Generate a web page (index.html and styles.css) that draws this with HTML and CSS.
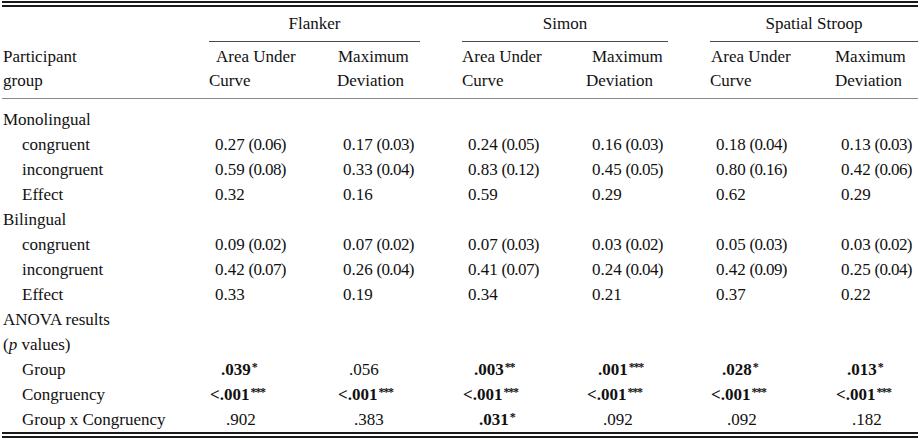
FILE: index.html
```html
<!DOCTYPE html>
<html lang="en">
<head>
<meta charset="utf-8">
<title>Mouse-tracking results by participant group</title>
<link rel="stylesheet" href="styles.css">
</head>
<body>
<div class="page">
  <div class="rule-double"></div>
  <table class="results">
    <colgroup>
      <col class="c-label"><col class="c-auc1"><col class="c-md1"><col class="c-gap">
      <col class="c-auc2"><col class="c-md2"><col class="c-gap">
      <col class="c-auc3"><col class="c-md3">
    </colgroup>
    <thead>
      <tr class="task-row">
        <th></th>
        <th colspan="2" class="task">Flanker</th>
        <th></th>
        <th colspan="2" class="task">Simon</th>
        <th></th>
        <th colspan="2" class="task">Spatial Stroop</th>
      </tr>
      <tr class="measure-row">
        <th class="label">Participant<br>group</th>
        <th class="ind-7">Area Under<br>Curve</th>
        <th class="ind-1">Maximum<br>Deviation</th>
        <th></th>
        <th>Area Under<br>Curve</th>
        <th class="ind-6">Maximum<br>Deviation</th>
        <th></th>
        <th class="ind-1">Area Under<br>Curve</th>
        <th>Maximum<br>Deviation</th>
      </tr>
    </thead>
    <tbody>
      <tr class="first"><td class="label" colspan="9">Monolingual</td></tr>
      <tr>
        <td class="label sub">congruent</td>
        <td class="num">0.27<span class="sd"> (0.06)</span></td><td class="num">0.17<span class="sd"> (0.03)</span></td><td></td>
        <td class="num">0.24<span class="sd"> (0.05)</span></td><td class="num">0.16<span class="sd"> (0.03)</span></td><td></td>
        <td class="num">0.18<span class="sd"> (0.04)</span></td><td class="num">0.13<span class="sd"> (0.03)</span></td>
      </tr>
      <tr>
        <td class="label sub">incongruent</td>
        <td class="num">0.59<span class="sd"> (0.08)</span></td><td class="num">0.33<span class="sd"> (0.04)</span></td><td></td>
        <td class="num">0.83<span class="sd"> (0.12)</span></td><td class="num">0.45<span class="sd"> (0.05)</span></td><td></td>
        <td class="num">0.80<span class="sd"> (0.16)</span></td><td class="num">0.42<span class="sd"> (0.06)</span></td>
      </tr>
      <tr>
        <td class="label sub">Effect</td>
        <td class="num">0.32</td><td class="num">0.16</td><td></td>
        <td class="num">0.59</td><td class="num">0.29</td><td></td>
        <td class="num">0.62</td><td class="num">0.29</td>
      </tr>
      <tr><td class="label" colspan="9">Bilingual</td></tr>
      <tr>
        <td class="label sub">congruent</td>
        <td class="num">0.09<span class="sd"> (0.02)</span></td><td class="num">0.07<span class="sd"> (0.02)</span></td><td></td>
        <td class="num">0.07<span class="sd"> (0.03)</span></td><td class="num">0.03<span class="sd"> (0.02)</span></td><td></td>
        <td class="num">0.05<span class="sd"> (0.03)</span></td><td class="num">0.03<span class="sd"> (0.02)</span></td>
      </tr>
      <tr>
        <td class="label sub">incongruent</td>
        <td class="num">0.42<span class="sd"> (0.07)</span></td><td class="num">0.26<span class="sd"> (0.04)</span></td><td></td>
        <td class="num">0.41<span class="sd"> (0.07)</span></td><td class="num">0.24<span class="sd"> (0.04)</span></td><td></td>
        <td class="num">0.42<span class="sd"> (0.09)</span></td><td class="num">0.25<span class="sd"> (0.04)</span></td>
      </tr>
      <tr>
        <td class="label sub">Effect</td>
        <td class="num">0.33</td><td class="num">0.19</td><td></td>
        <td class="num">0.34</td><td class="num">0.21</td><td></td>
        <td class="num">0.37</td><td class="num">0.22</td>
      </tr>
      <tr><td class="label" colspan="9">ANOVA results</td></tr>
      <tr><td class="label" colspan="9">(<i>p</i> values)</td></tr>
      <tr class="p-grp">
        <td class="label sub">Group</td>
        <td class="num"><b>.039<sup>*</sup></b></td><td class="num">.056</td><td></td>
        <td class="num"><b>.003<sup>**</sup></b></td><td class="num"><b>.001<sup>***</sup></b></td><td></td>
        <td class="num"><b>.028<sup>*</sup></b></td><td class="num"><b>.013<sup>*</sup></b></td>
      </tr>
      <tr class="p-cong">
        <td class="label sub">Congruency</td>
        <td class="num"><b>&lt;.001<sup>***</sup></b></td><td class="num"><b>&lt;.001<sup>***</sup></b></td><td></td>
        <td class="num"><b>&lt;.001<sup>***</sup></b></td><td class="num"><b>&lt;.001<sup>***</sup></b></td><td></td>
        <td class="num"><b>&lt;.001<sup>***</sup></b></td><td class="num"><b>&lt;.001<sup>***</sup></b></td>
      </tr>
      <tr class="p-gxc">
        <td class="label sub">Group x Congruency</td>
        <td class="num">.902</td><td class="num">.383</td><td></td>
        <td class="num"><b>.031<sup>*</sup></b></td><td class="num">.092</td><td></td>
        <td class="num">.092</td><td class="num">.182</td>
      </tr>
    </tbody>
  </table>
  <div class="rule-double"></div>
</div>
</body>
</html>
```

FILE: styles.css
```css
html, body {
  margin: 0;
  padding: 0;
  background: #ffffff;
}

body {
  font-family: "Liberation Serif", "Times New Roman", serif;
  font-size: 17px;
  color: #111111;
}

.page {
  width: 916px;
  padding: 1px 2px 0;
}

.rule-double {
  height: 2px;
  border-top: 2px solid #1a1a1a;
  border-bottom: 2px solid #1a1a1a;
}

.results {
  width: 916px;
  table-layout: fixed;
  border-collapse: separate;
  border-spacing: 0;
}

.c-label { width: 207px; }
.c-auc1 { width: 128px; }
.c-md1 { width: 83px; }
.c-gap { width: 42px; }
.c-auc2 { width: 124px; }
.c-md2 { width: 82px; }
.c-auc3 { width: 125px; }
.c-md3 { width: 83px; }

.results th,
.results td {
  padding: 0;
  font-weight: normal;
  text-align: left;
  vertical-align: top;
  white-space: nowrap;
}

.task-row th {
  line-height: 25px;
  padding: 4px 0 5px;
}

.task-row th.task {
  text-align: center;
  border-bottom: 1px solid #4a4a4a;
}

.measure-row th {
  line-height: 24px;
  padding: 3px 0 5px;
  border-bottom: 1px solid #8a8a8a;
}

.ind-7 { text-indent: 7px; }
.ind-6 { text-indent: 6px; }
.ind-1 { text-indent: 1px; }

.results td {
  line-height: 25px;
  height: 25px;
}

.results tr.first td {
  padding-top: 8px;
}

.results .label {
  padding-left: 1px;
}

.results .label.sub {
  padding-left: 20px;
}

.results td.num {
  padding-left: 6px;
}

.sd {
  letter-spacing: -0.6px;
}

.results tr.p-grp td.num { padding-left: 12px; }
.results tr.p-cong td.num { padding-left: 1px; }
.results tr.p-gxc td.num { padding-left: 17px; }

b {
  font-weight: bold;
}

sup {
  font-size: 12px;
  line-height: 0;
  vertical-align: 4px;
  letter-spacing: -1.2px;
  margin-left: 1px;
}
```
